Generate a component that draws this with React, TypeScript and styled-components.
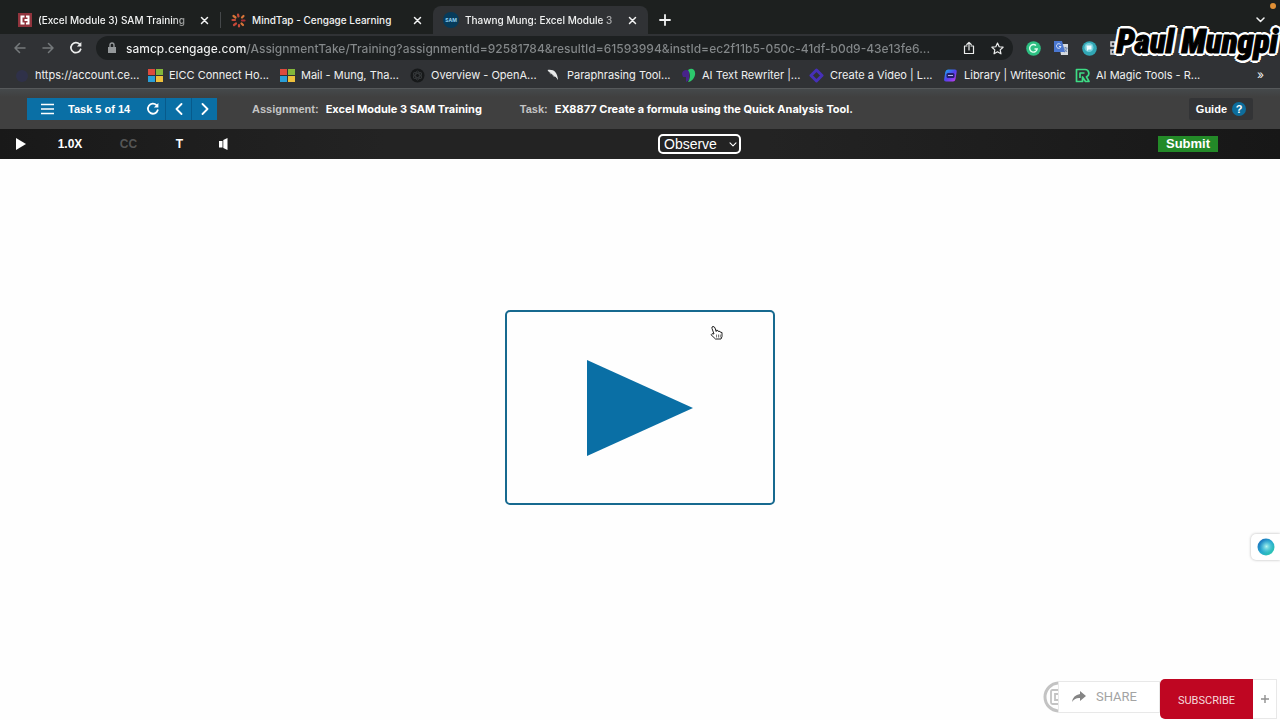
import React from "react";
import styled, { createGlobalStyle } from "styled-components";

const ui = `Inter, "Liberation Sans", sans-serif`;
const arial = `"Liberation Sans", Arial, sans-serif`;
const blue = "#0a6fa5";

const Global = createGlobalStyle`
  * { box-sizing: border-box; }
  body { margin: 0; background: #fefefe; font-family: ${ui}; overflow: hidden; }
  button { border: 0; padding: 0; background: none; color: inherit; font: inherit; cursor: pointer; }
  a { color: inherit; text-decoration: none; }
  svg { display: block; flex: none; }
`;

const Page = styled.div`
  display: flex;
  flex-direction: column;
  min-height: 100vh;
`;

/* Browser chrome */
const TabStrip = styled.div`
  display: flex;
  align-items: flex-end;
  height: 34px;
  padding-left: 8px;
  background: #1d201f;
  color: #f2f3f3;
`;

const Tab = styled.div<{ $active?: boolean; $width: number }>`
  display: flex;
  align-items: center;
  flex: 0 1 ${(p) => p.$width}px;
  min-width: 0;
  height: 28px;
  padding: 0 8px 0 10px;
  gap: 6px;
  border-radius: 8px 8px 0 0;
  background: ${(p) => (p.$active ? "#303235" : "transparent")};
`;

const TabTitle = styled.span<{ $fade?: boolean }>`
  flex: 1;
  min-width: 0;
  white-space: nowrap;
  font-size: 10px;
  font-weight: 500;
  line-height: 16px;
  ${(p) => p.$fade && "mask-image: linear-gradient(90deg, #000 88%, transparent 106%);"}
`;

const TabDivider = styled.i`
  width: 1px;
  height: 16px;
  margin-bottom: 6px;
  background: #45484a;
`;

const IconButton = styled.button<{ $size?: number }>`
  display: grid;
  place-items: center;
  flex: none;
  width: ${(p) => p.$size ?? 16}px;
  height: ${(p) => p.$size ?? 16}px;
`;

const NewTab = styled(IconButton)`
  margin: 0 auto 6px 9px;
`;

const TabMenu = styled(IconButton)`
  margin: 0 12px 6px 0;
`;

const Toolbar = styled.div`
  display: flex;
  align-items: center;
  height: 28px;
  padding: 0 8px 0 12px;
  background: #303235;
  color: #eceded;
`;

const NavButtons = styled.div`
  display: flex;
  gap: 12px;
  margin-right: 12px;
`;

const AddressBar = styled.div`
  display: flex;
  align-items: center;
  flex: 0 1 917px;
  min-width: 0;
  height: 24px;
  padding: 0 8px 0 10px;
  gap: 8px;
  border-radius: 12px;
  background: #1d2021;
`;

const AddressInput = styled.input`
  flex: 1;
  min-width: 0;
  height: 20px;
  padding: 0;
  border: 0;
  outline: 0;
  font-family: ${ui};
  font-size: 12px;
  font-weight: 500;
  color: transparent;
  background: linear-gradient(90deg, #f4f5f5 121px, #84888a 121px);
  background-clip: text;
  -webkit-background-clip: text;
`;

const AddressActions = styled.div`
  display: flex;
  gap: 12px;
`;

const Extensions = styled.div`
  display: flex;
  gap: 12px;
  margin-left: 12px;
`;

const Bookmarks = styled.nav`
  display: flex;
  align-items: center;
  height: 27px;
  padding: 0 16px 0 14px;
  border-bottom: 1px solid #56595b;
  background: #303235;
  color: #eff0f0;
`;

const Bookmark = styled.a<{ $width: number }>`
  display: flex;
  align-items: center;
  flex: 0 1 ${(p) => p.$width}px;
  min-width: 0;
  gap: 6px;
  font-size: 11px;
  font-weight: 400;
  line-height: 16px;
  white-space: nowrap;
`;

const MoreBookmarks = styled.button`
  margin-left: auto;
  font-size: 12px;
  line-height: 16px;
`;

/* Training page */
const Header = styled.header`
  display: flex;
  align-items: center;
  height: 40px;
  padding: 0 27px;
  background: linear-gradient(#45494b, #404040 8px);
  color: #fff;
  font-family: ${arial};
  font-size: 11px;
  font-weight: 700;
  line-height: 16px;
`;

const TaskNav = styled.div`
  display: flex;
  flex: none;
  width: 190px;
  height: 22px;
  margin-right: 35px;
  background: ${blue};
`;

const TaskMenu = styled.button`
  display: flex;
  align-items: center;
  gap: 14px;
  flex: 1;
  padding-left: 14px;
`;

const TaskStep = styled.button<{ $rule?: boolean }>`
  display: grid;
  place-items: center;
  width: 26px;
  border-left: 1px solid ${(p) => (p.$rule ? "#075a8b" : "transparent")};
`;

const Fact = styled.p`
  display: flex;
  gap: 7px;
  margin: 0 38px 0 0;
  white-space: nowrap;
`;

const FactName = styled.span`
  color: #c4c4c4;
`;

const FactValue = styled.span`
  font-family: ${ui};
`;

const Guide = styled.button`
  display: flex;
  align-items: center;
  gap: 5px;
  height: 22px;
  margin-left: auto;
  padding: 0 7px;
  border-radius: 2px;
  background: #333436;
`;

const Help = styled.span`
  width: 14px;
  height: 14px;
  border-radius: 50%;
  background: #0d6d9c;
  line-height: 14px;
  text-align: center;
`;

const Controls = styled.div`
  display: flex;
  align-items: center;
  height: 30px;
  background: linear-gradient(90deg, #191919, #232323 30%, #232323 60%, #171717);
  color: #fff;
  font-family: ${arial};
  font-size: 12px;
  font-weight: 700;
`;

const PlayerTools = styled.div`
  display: flex;
  align-items: center;
  flex: 0 0 calc(50% + 18px);
  padding-left: 16px;
`;

const Tool = styled.button<{ $width: number; $dim?: boolean }>`
  display: grid;
  place-items: center;
  width: ${(p) => p.$width}px;
  height: 20px;
  color: ${(p) => (p.$dim ? "#555" : "#fff")};
`;

const SelectBox = styled.label`
  display: grid;
  align-items: center;
  width: 83px;
  height: 20px;
  > * { grid-area: 1 / 1; }
  > svg { justify-self: end; margin-right: 4px; pointer-events: none; }
`;

const Select = styled.select`
  appearance: none;
  width: 100%;
  height: 20px;
  padding: 0 4px;
  border: 2px solid #fff;
  border-radius: 5px;
  background: transparent;
  color: #fff;
  font-family: ${arial};
  font-size: 14px;
  line-height: 16px;
`;

const Submit = styled.button`
  width: 60px;
  height: 16px;
  margin: 0 62px 0 auto;
  background: #238a28;
  font-size: 13px;
  line-height: 16px;
`;

const Stage = styled.main`
  display: flex;
  flex: 1;
  align-items: center;
  justify-content: center;
  padding-bottom: 64px;
`;

const PlayCard = styled.button`
  display: grid;
  place-items: center;
  width: 270px;
  height: 195px;
  border: 2px solid #17698f;
  border-radius: 5px;
`;

/* Layers above the page */
const Cursor = styled.svg`
  position: absolute;
  left: calc(50% + 70px);
  top: 325px;
`;

const RecordingDot = styled.i`
  position: absolute;
  top: 3px;
  right: 4px;
  width: 6px;
  height: 6px;
  border-radius: 50%;
  background: #e08f35;
`;

const Watermark = styled.div`
  position: absolute;
  top: 22px;
  right: 2px;
  color: #000;
  font-family: "Roboto Condensed", Roboto, sans-serif;
  font-size: 33px;
  font-style: italic;
  font-weight: 900;
  line-height: 40px;
  white-space: nowrap;
  -webkit-text-stroke: 1px #000;
  text-shadow: 3px 0 #fff, -3px 0 #fff, 0 3px #fff, 0 -3px #fff, 2px 2px #fff, -2px 2px #fff,
    2px -2px #fff, -2px -2px #fff;
`;

const Assistant = styled.button`
  position: absolute;
  right: 0;
  bottom: 160px;
  display: grid;
  place-items: center;
  width: 29px;
  height: 26px;
  border-radius: 5px 0 0 5px;
  background: #fff;
  box-shadow: 0 0 3px #b5b5b5;
`;

const SocialBar = styled.div`
  position: absolute;
  right: 3px;
  bottom: 1px;
  display: flex;
  align-items: center;
  font-family: Roboto, sans-serif;
`;

const Share = styled.button`
  display: flex;
  align-items: center;
  gap: 10px;
  width: 102px;
  height: 32px;
  margin-bottom: 5px;
  padding-left: 13px;
  border: 1px solid #e8e8e8;
  background: #fff;
  color: #a3a3a3;
  font-size: 13px;
`;

const Badge = styled.svg`
  margin-bottom: 5px;
`;

const Subscribe = styled.button`
  width: 93px;
  height: 40px;
  padding-top: 2px;
  border-radius: 5px 0 0 5px;
  background: #bf0622;
  color: #f5dadd;
  font-size: 11px;
`;

const Plus = styled.button`
  display: grid;
  place-items: center;
  width: 24px;
  height: 40px;
  border: 1px solid #e8e8e8;
  border-left: 0;
  background: #fff;
`;

const stroke = (width = 1.5) => ({
  fill: "none",
  stroke: "currentColor",
  strokeWidth: width,
  strokeLinecap: "round" as const,
  strokeLinejoin: "round" as const,
});

const Close = () => (
  <svg width="9" height="9" viewBox="0 0 9 9" {...stroke(1.5)}><path d="M1.500 1.500l6 6M7.500 1.500l-6 6" /></svg>
);

const Microsoft = () => (
  <svg width="15" height="15" viewBox="0 0 15 15">
    <path fill="#dc4b3e" d="M0 1h7v6H0z" /><path fill="#83b63b" d="M8 1h7v6H8z" />
    <path fill="#2a9fd8" d="M0 8h7v6H0z" /><path fill="#eec03c" d="M8 8h7v6H8z" />
  </svg>
);

const Reload = ({ size, w }: { size: number; w: number }) => (
  <svg width={size} height={size} viewBox="0 0 14 14" {...stroke(w)}>
    <path d="M11.7 8.2a5 5 0 1 1-1.2-5" /><path d="M12.4 1v4.6H7.9z" fill="currentColor" stroke="none" />
  </svg>
);

const bookmarks: { label: string; width: number; icon: React.ReactNode }[] = [
  { label: "https://account.ce...", width: 134, icon: <svg width="15" height="15"><circle cx="8" cy="8" r="6" fill="#30315a" opacity=".55" /></svg> },
  { label: "EICC Connect Ho...", width: 132, icon: <Microsoft /> },
  { label: "Mail - Mung, Tha...", width: 130, icon: <Microsoft /> },
  {
    label: "Overview - OpenA...", width: 136,
    icon: (
      <svg width="15" height="15" viewBox="0 0 15 15">
        <circle cx="7.5" cy="7.5" r="7" fill="#17191a" />
        <g fill="none" stroke="#35383a"><ellipse cx="7.5" cy="7.5" rx="2" ry="4.5" /><ellipse cx="7.5" cy="7.5" rx="2" ry="4.5" transform="rotate(60 7.5 7.5)" /><ellipse cx="7.5" cy="7.5" rx="2" ry="4.5" transform="rotate(120 7.5 7.5)" /></g>
      </svg>
    ),
  },
  {
    label: "Paraphrasing Tool...", width: 135,
    icon: <svg width="15" height="15" viewBox="0 0 15 15"><path fill="#e8eaea" d="M1.500 2c6-1 10 2 10.500 10L9.500 8.800 8 9 5.500 6 4.500 6.200z" /><path d="M3 4l8 7" stroke="#303235" strokeWidth=".6" /></svg>,
  },
  {
    label: "AI Text Rewriter |...", width: 128,
    icon: <svg width="15" height="15" viewBox="0 0 15 15"><path fill="#48238a" d="M1 6c0-4 5-5 7-3v9l-3 2V9H2z" /><path fill="#2cc76c" d="M7 2c4-3 8 0 7 5-1 4-4 7-7 7 2-3 3-8 0-12z" /></svg>,
  },
  {
    label: "Create a Video | L...", width: 134,
    icon: <svg width="15" height="15" viewBox="0 0 15 15"><path fill="none" stroke="#4630b8" strokeWidth="3" strokeLinejoin="round" d="M7.5 2L13 7.5 7.5 13 2 7.5z" /></svg>,
  },
  {
    label: "Library | Writesonic", width: 132,
    icon: (
      <svg width="15" height="15" viewBox="0 0 15 15">
        <defs><linearGradient id="ws" x2="1" y2="1"><stop stopColor="#16b8f2" /><stop offset=".5" stopColor="#5140ee" /><stop offset="1" stopColor="#d13ceb" /></linearGradient></defs>
        <path fill="url(#ws)" d="M5 1.500h7q2 0 1.700 2l-1.200 7.500q-.4 2.500-2.500 2.500H3q-2.200 0-1.800-2.500L2.300 4Q2.800 1.500 5 1.500z" /><rect x="3.500" y="5" width="8" height="5" rx="1.500" fill="#23206b" /><path d="M5 7.500h5" stroke="#b9b6f2" />
      </svg>
    ),
  },
  {
    label: "AI Magic Tools - R...", width: 140,
    icon: <svg width="15" height="15" viewBox="0 0 15 15" fill="none" stroke="#3ddc85" strokeWidth="1.700" strokeLinejoin="round"><path d="M1.500 1.500h8.500a3.800 3.800 0 0 1 1.500 7.300L14 13.500h-3.500L7.500 9v4.500h-6zM5 10V5h4.500" /></svg>,
  },
];

const url =
  "samcp.cengage.com/AssignmentTake/Training?assignmentId=92581784&resultId=61593994&instId=ec2f11b5-050c-41df-b0d9-43e13fe6...";

export default function App() {
  return (
    <Page>
      <Global />
      <TabStrip>
        <Tab $width={212}>
          <svg width="14" height="14" viewBox="0 0 14 14">
            <path fill="#91343d" d="M0 0h14v14H0z" />
            <path fill="none" stroke="#fff" strokeWidth="2" d="M6.500 3.500h-3v7h3M8 3.500h2.500v7H8M6.500 7H11" />
          </svg>
          <TabTitle $fade>(Excel Module 3) SAM Training</TabTitle>
          <IconButton aria-label="Close tab"><Close /></IconButton>
        </Tab>
        <TabDivider />
        <Tab $width={212}>
          <svg width="15" height="15" viewBox="0 0 15 15" fill="none" strokeWidth="2.200" strokeLinecap="round">
            <path stroke="#c54838" d="M7 1.500l.5 2M1.500 7h2.500M3 12l2-1.500M8 13.500V12" />
            <path stroke="#d87539" d="M2.500 3l2 1.500M12.500 3l-1.500 1.500M12 12l-1.500-1.500" /><path stroke="#a92d34" d="M11 7.500h2.500" />
          </svg>
          <TabTitle>MindTap - Cengage Learning</TabTitle>
          <IconButton aria-label="Close tab"><Close /></IconButton>
        </Tab>
        <Tab $active $width={215}>
          <svg width="16" height="16" viewBox="0 0 16 16">
            <circle cx="8" cy="8" r="8" fill="#073b5a" />
            <text x="8" y="10" fill="#8fd0ee" fontSize="5" fontWeight="700" textAnchor="middle" fontFamily="Inter, sans-serif">SAM</text>
          </svg>
          <TabTitle $fade>Thawng Mung: Excel Module 3</TabTitle>
          <IconButton aria-label="Close tab"><Close /></IconButton>
        </Tab>
        <NewTab aria-label="New tab"><svg width="12" height="12" viewBox="0 0 12 12" {...stroke(1.8)}><path d="M6 1v10M1 6h10" /></svg></NewTab>
        <TabMenu aria-label="Search tabs"><svg width="9" height="6" viewBox="0 0 9 6" {...stroke(1.5)}><path d="M1 1l3.500 3.500L8 1" /></svg></TabMenu>
      </TabStrip>

      <Toolbar>
        <NavButtons>
          <IconButton aria-label="Back"><svg width="12" height="12" viewBox="0 0 12 12" {...stroke(1.5)} stroke="#75797b"><path d="M11 6H1M5.500 1.500L1 6l4.500 4.500" /></svg></IconButton>
          <IconButton aria-label="Forward"><svg width="12" height="12" viewBox="0 0 12 12" {...stroke(1.5)} stroke="#75797b"><path d="M1 6h10M6.500 1.500L11 6l-4.500 4.500" /></svg></IconButton>
          <IconButton aria-label="Reload"><Reload size={14} w={1.7} /></IconButton>
        </NavButtons>
        <AddressBar>
          <svg width="12" height="12" viewBox="0 0 12 12"><path fill="#94989a" d="M2 5h8v6H2z" /><path fill="none" stroke="#94989a" strokeWidth="1.400" d="M4 5V3a2 2 0 0 1 4 0v2" /></svg>
          <AddressInput aria-label="Address" defaultValue={url} />
          <AddressActions>
            <IconButton aria-label="Share page"><svg width="12" height="14" viewBox="0 0 12 14" {...stroke(1.2)}><path d="M4 5H1.500v7.500h9V5H8M6 9V1.500M3.800 3.500L6 1.300l2.200 2.200" /></svg></IconButton>
            <IconButton aria-label="Bookmark"><svg width="13" height="13" viewBox="0 0 14 14" {...stroke(1.3)}><path d="M7 1.200l1.800 3.900 4.200.5-3.100 2.900.8 4.200L7 10.600l-3.700 2.100.8-4.200L1 5.600l4.200-.5z" /></svg></IconButton>
          </AddressActions>
        </AddressBar>
        <Extensions>
          <IconButton aria-label="Grammarly"><svg width="15" height="15" viewBox="0 0 15 15"><circle cx="7.500" cy="7.500" r="7.300" fill="#2dbf82" /><path d="M10 4.500a3.800 3.800 0 1 0 1.200 3.500H8.500" fill="none" stroke="#e4fff2" strokeWidth="1.400" /></svg></IconButton>
          <IconButton aria-label="Translate"><svg width="16" height="16" viewBox="0 0 16 16"><path fill="#d5d9de" d="M6 4h9v11H8z" /><path fill="#4a77d1" d="M1 1h8l3 11H1z" /><path d="M7.500 4.500a2.300 2.300 0 1 0 .5 2H6" fill="none" stroke="#dce6fa" /><path d="M10.500 8h4M12.500 7v1M14 8c0 2-2 4-3 4M11.500 9l2.500 3" fill="none" stroke="#5c7aa8" strokeWidth=".8" /></svg></IconButton>
          <IconButton aria-label="Chat"><svg width="15" height="15" viewBox="0 0 15 15"><circle cx="7.500" cy="7.500" r="7.300" fill="#31a6b4" /><circle cx="7" cy="6.500" r="4.500" fill="#75cfdb" /><path fill="#effcff" d="M4.500 4.500h5v4h-3L5 10z" /></svg></IconButton>
          <IconButton aria-label="QR code"><svg width="14" height="14" viewBox="0 0 14 14" fill="none" stroke="#ddd" strokeWidth="1.500"><path d="M1 1h4v4H1zM1 9h4v4H1zM9 1h4v4H9zM9 9h4v4H9z" /></svg></IconButton>
        </Extensions>
      </Toolbar>

      <Bookmarks>
        {bookmarks.map((b) => (
          <Bookmark key={b.label} href="#" $width={b.width}>{b.icon}{b.label}</Bookmark>
        ))}
        <MoreBookmarks aria-label="More bookmarks">»</MoreBookmarks>
      </Bookmarks>

      <Header>
        <TaskNav>
          <TaskMenu>
            <svg width="13" height="12" viewBox="0 0 13 12" fill="none" stroke="#fff" strokeWidth="1.500"><path d="M0 1.500h13M0 6h13M0 10.500h13" /></svg>
            Task 5 of 14
          </TaskMenu>
          <TaskStep aria-label="Restart task"><Reload size={14} w={1.8} /></TaskStep>
          <TaskStep $rule aria-label="Previous task"><svg width="8" height="12" viewBox="0 0 8 12" {...stroke(1.8)}><path d="M6.500 1L1.500 6l5 5" /></svg></TaskStep>
          <TaskStep $rule aria-label="Next task"><svg width="8" height="12" viewBox="0 0 8 12" {...stroke(1.8)}><path d="M1.500 1l5 5-5 5" /></svg></TaskStep>
        </TaskNav>
        <Fact><FactName>Assignment:</FactName><FactValue>Excel Module 3 SAM Training</FactValue></Fact>
        <Fact><FactName>Task:</FactName><FactValue>EX8877 Create a formula using the Quick Analysis Tool.</FactValue></Fact>
        <Guide>Guide <Help>?</Help></Guide>
      </Header>

      <Controls>
        <PlayerTools>
          <Tool $width={10} aria-label="Play"><svg width="10" height="12" viewBox="0 0 10 12"><path fill="#fff" d="M0 0l10 6-10 6z" /></svg></Tool>
          <Tool $width={88}>1.0X</Tool>
          <Tool $width={29} $dim>CC</Tool>
          <Tool $width={73}>T</Tool>
          <Tool $width={16} aria-label="Volume"><svg width="10" height="12" viewBox="0 0 10 12"><path fill="#fff" d="M0 3h3.500v6.500H0zM4.300 2L8.500 0v12L4.300 10z" /></svg></Tool>
        </PlayerTools>
        <SelectBox>
          <Select aria-label="Mode" defaultValue="Observe"><option>Observe</option></Select>
          <svg width="8" height="5" viewBox="0 0 8 5" {...stroke(1.1)}><path d="M1 .8l3 3 3-3" /></svg>
        </SelectBox>
        <Submit>Submit</Submit>
      </Controls>

      <Stage>
        <PlayCard aria-label="Play video">
          <svg width="108" height="96" viewBox="0 0 108 96"><path fill={blue} d="M1 0l106 48L1 96z" /></svg>
        </PlayCard>
      </Stage>

      <Cursor width="13" height="16" viewBox="0 0 13 16">
        <path fill="#fff" stroke="#222" strokeLinejoin="round" d="M4 9L2 3.500Q1.500 1.500 3 1.500T5 3l1.200 3.500.2-1.300L8 5.500l.3 1L10 6.300l.5 1 1.500.2v4L11 14H5.500L1 9.700Q1.500 8 4 9z" />
        <path stroke="#555" strokeWidth=".8" d="M6.500 9.500v3M8.500 9.500v3M10.300 9.500v3" />
      </Cursor>
      <RecordingDot />
      <Watermark>Paul Mungpi</Watermark>
      <Assistant aria-label="Open assistant">
        <svg width="18" height="18" viewBox="0 0 18 18">
          <defs>
            <linearGradient id="orb" x2="1" y2="1"><stop stopColor="#1a63b8" /><stop offset=".5" stopColor="#27a9cf" /><stop offset="1" stopColor="#2fd0a8" /></linearGradient>
            <radialGradient id="glow"><stop stopColor="#b4f5ee" /><stop offset="1" stopColor="#5fd6e6" stopOpacity="0" /></radialGradient>
          </defs>
          <circle cx="9" cy="9" r="8.500" fill="url(#orb)" /><circle cx="9.500" cy="8.500" r="7" fill="url(#glow)" />
        </svg>
      </Assistant>
      <SocialBar>
        <Badge width="15" height="32" viewBox="0 0 15 32" fill="none" stroke="#c3c3c3">
          <path strokeWidth="3" d="M16 2A14 14 0 0 0 16 30" /><path strokeWidth="1.800" d="M15 9H9.500Q8 9 8 10.500v11Q8 23 9.500 23H15M15 13h-3v6h3" />
        </Badge>
        <Share>
          <svg width="14" height="12" viewBox="0 0 14 12"><path fill="#858585" d="M8 0l6 5-6 5V7Q3 6.500 0 11 1 4 8 3z" /></svg>
          SHARE
        </Share>
        <Subscribe>SUBSCRIBE</Subscribe>
        <Plus aria-label="Add"><svg width="8" height="8" viewBox="0 0 8 8" stroke="#909090" strokeWidth="1.400"><path d="M4 0v8M0 4h8" /></svg></Plus>
      </SocialBar>
    </Page>
  );
}
